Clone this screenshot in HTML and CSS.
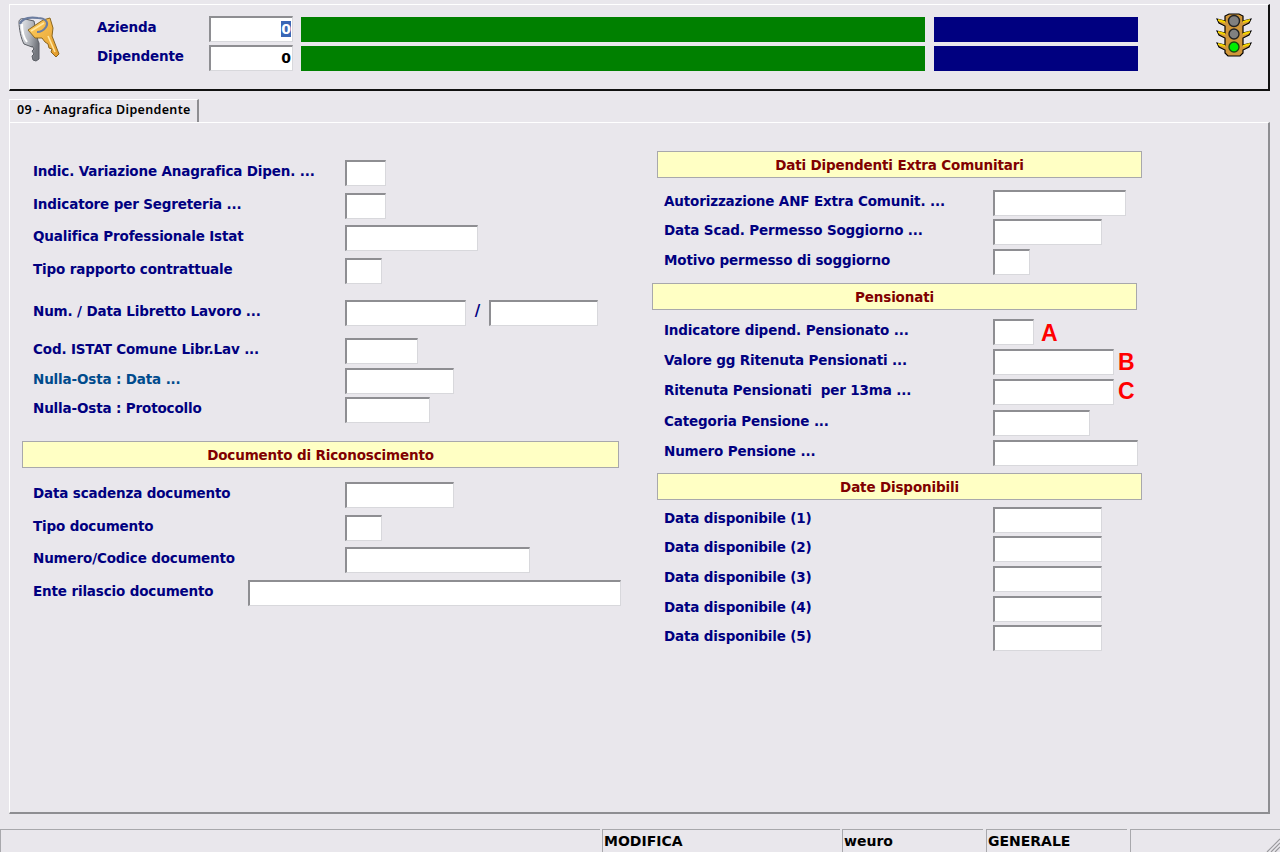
FILE: index.html
```html
<!DOCTYPE html>
<html lang="it">
<head>
<meta charset="utf-8">
<title>Anagrafica Dipendente</title>
<link rel="stylesheet" href="styles.css">
</head>
<body>
<div class="app">
  <header class="top">
    <svg class="keys" viewBox="0 0 44 50" width="44" height="50" aria-hidden="true">
      <defs>
        <linearGradient id="silver" x1="0" y1="0" x2="1" y2="0.4">
          <stop offset="0" stop-color="#eef0f3"/>
          <stop offset="0.6" stop-color="#b4b7bd"/>
          <stop offset="1" stop-color="#74777e"/>
        </linearGradient>
        <linearGradient id="gold" x1="0" y1="0" x2="1" y2="1">
          <stop offset="0" stop-color="#ffcf62"/>
          <stop offset="1" stop-color="#e29a28"/>
        </linearGradient>
      </defs>
      <path d="M3 8 C3 5 6 4 9 5 L18 7 L22 27 L23 29 L23 45 L20 47 L17 46 L16 42 L18 40 L16 37 L18 35 L16 32 L16 33 L8 30 C5 25 3 14 3 8Z" fill="url(#silver)" stroke="#5a5d64" stroke-width="1"/>
      <path d="M6 10 C6 16 8 24 11 28" fill="none" stroke="#fff" stroke-width="2"/>
      <path d="M12 16 L27 6 L34 4 L37 14 L36 22 L43 40 L40 43 L35 38 L36 35 L33 34 L32 30 L29 28 L26 24 L19 24 Z" fill="url(#gold)" stroke="#8a6620" stroke-width="1"/>
      <path d="M15 17 L28 9 M32 22 L39 38" fill="none" stroke="#ffe6a0" stroke-width="1.6"/>
      <path d="M4 10 C6 4 14 3 22 4 C29 4 33 8 30 13 C28 16 24 18 21 18" fill="none" stroke="#6c7da0" stroke-width="2.2"/>
    </svg>
    <div class="id-labels">
      <div class="id-label">Azienda</div>
      <div class="id-label">Dipendente</div>
    </div>
    <div class="id-fields">
      <div class="id-row">
        <div class="input code"><span class="sel">0</span></div>
        <div class="bar green"></div>
        <div class="bar navy"></div>
      </div>
      <div class="id-row">
        <div class="input code"><span>0</span></div>
        <div class="bar green"></div>
        <div class="bar navy"></div>
      </div>
    </div>
    <svg class="light" viewBox="0 0 36 44" width="36" height="44" aria-hidden="true">
      <path d="M1 6 L9 8 L9 3 L13 1 L23 1 L27 3 L27 8 L35 6 L33 10 L27 13 L27 20 L35 18 L33 22 L27 25 L27 32 L35 30 L33 34 L27 37 L27 40 L24 43 L12 43 L9 40 L9 37 L3 34 L1 30 L9 32 L9 25 L3 22 L1 18 L9 20 L9 13 L3 10Z" fill="#d0973a" stroke="#000" stroke-width="1.2"/>
      <path d="M2 7 L9 9 M34 7 L27 9 M2 19 L9 21 M34 19 L27 21 M2 31 L9 33 M34 31 L27 33" stroke="#f5d400" stroke-width="2"/>
      <circle cx="18" cy="8" r="5.5" fill="#808080" stroke="#222" stroke-width="1.4"/>
      <circle cx="18" cy="21" r="5" fill="#808080" stroke="#222" stroke-width="1.4"/>
      <circle cx="18" cy="34" r="5" fill="#00f000" stroke="#1c4a10" stroke-width="1.4"/>
    </svg>
  </header>

  <nav class="tabs"><div class="tab">09 - Anagrafica Dipendente</div></nav>

  <main class="panel">
    <section class="col col-left">
      <div class="row m0"><label class="lab">Indic. Variazione Anagrafica Dipen. ...</label><div class="input w41"></div></div>
      <div class="row m7"><label class="lab">Indicatore per Segreteria ...</label><div class="input w41"></div></div>
      <div class="row m6"><label class="lab">Qualifica Professionale Istat</label><div class="input w133"></div></div>
      <div class="row m7"><label class="lab">Tipo rapporto contrattuale</label><div class="input w37"></div></div>
      <div class="row m16"><label class="lab">Num. / Data Libretto Lavoro ...</label><div class="input w121"></div><span class="slash">/</span><div class="input w109"></div></div>
      <div class="row m12"><label class="lab">Cod. ISTAT Comune Libr.Lav ...</label><div class="input w73"></div></div>
      <div class="row m4"><label class="lab lab-alt">Nulla-Osta : Data ...</label><div class="input w109"></div></div>
      <div class="row m3"><label class="lab">Nulla-Osta : Protocollo</label><div class="input w85"></div></div>
      <h2 class="band band-left">Documento di Riconoscimento</h2>
      <div class="row m14"><label class="lab">Data scadenza documento</label><div class="input w109"></div></div>
      <div class="row m7"><label class="lab">Tipo documento</label><div class="input w37"></div></div>
      <div class="row m6"><label class="lab">Numero/Codice documento</label><div class="input w185"></div></div>
      <div class="row m7"><label class="lab lab-short">Ente rilascio documento</label><div class="input w373"></div></div>
    </section>

    <section class="col col-right">
      <h2 class="band band-first">Dati Dipendenti Extra Comunitari</h2>
      <div class="row m12"><label class="lab lab-r">Autorizzazione ANF Extra Comunit. ...</label><div class="input w133"></div></div>
      <div class="row m3"><label class="lab lab-r">Data Scad. Permesso Soggiorno ...</label><div class="input w109"></div></div>
      <div class="row m4"><label class="lab lab-r">Motivo permesso di soggiorno</label><div class="input w37"></div></div>
      <h2 class="band band-shift">Pensionati</h2>
      <div class="row m9"><label class="lab lab-r">Indicatore dipend. Pensionato ...</label><div class="input w41"></div><span class="mark mark-a">A</span></div>
      <div class="row m4"><label class="lab lab-r">Valore gg Ritenuta Pensionati ...</label><div class="input w121"></div><span class="mark mark-b">B</span></div>
      <div class="row m4"><label class="lab lab-r">Ritenuta Pensionati&nbsp; per 13ma ...</label><div class="input w121"></div><span class="mark mark-c">C</span></div>
      <div class="row m5"><label class="lab lab-r">Categoria Pensione ...</label><div class="input w97"></div></div>
      <div class="row m4"><label class="lab lab-r">Numero Pensione ...</label><div class="input w145"></div></div>
      <h2 class="band band-date">Date Disponibili</h2>
      <div class="row m7"><label class="lab lab-r">Data disponibile (1)</label><div class="input w109"></div></div>
      <div class="row m3"><label class="lab lab-r">Data disponibile (2)</label><div class="input w109"></div></div>
      <div class="row m4"><label class="lab lab-r">Data disponibile (3)</label><div class="input w109"></div></div>
      <div class="row m4"><label class="lab lab-r">Data disponibile (4)</label><div class="input w109"></div></div>
      <div class="row m3"><label class="lab lab-r">Data disponibile (5)</label><div class="input w109"></div></div>
    </section>
  </main>

  <footer class="status">
    <div class="cell c1"></div>
    <div class="cell c2">MODIFICA</div>
    <div class="cell c3">weuro</div>
    <div class="cell c4">GENERALE</div>
    <div class="cell c5">
      <svg class="grip" viewBox="0 0 14 14" width="14" height="14" aria-hidden="true">
        <path d="M14 1 L1 14 M14 5 L5 14 M14 9 L9 14" stroke="#9a9a9e" stroke-width="1.2"/>
      </svg>
    </div>
  </footer>
</div>
</body>
</html>
```
FILE: styles.css
```css
* { box-sizing: border-box; }
html, body { margin: 0; padding: 0; }
body {
  width: 1280px;
  height: 852px;
  overflow: hidden;
  background: #e9e7ec;
  font-family: "DejaVu Sans", "Noto Sans", sans-serif;
}
.app { display: flex; flex-direction: column; height: 852px; padding-top: 4px; }

/* top identification strip */
.top {
  display: flex;
  align-items: flex-start;
  width: 1261px;
  height: 87px;
  margin-left: 9px;
  flex: none;
  border-top: 1px solid #fff;
  border-left: 1px solid #fff;
  border-right: 2px solid #111;
  border-bottom: 2px solid #111;
}
.keys { margin: 9px 0 0 6px; flex: none; }
.id-labels { width: 112px; margin: 10px 0 0 37px; flex: none; }
.id-label {
  height: 28.5px;
  line-height: 24px;
  font-size: 13.5px;
  font-weight: 700;
  letter-spacing: -.15px;
  color: #000080;
}
.id-fields { margin-top: 11px; width: 929px; flex: none; }
.id-row { display: flex; height: 26px; margin-bottom: 3px; }
.code {
  width: 84px;
  margin-right: 8px;
  padding-right: 1px;
  text-align: right;
  line-height: 22px;
  font-size: 14px;
  font-weight: 700;
  color: #000;
}
.sel { background: #3a67b5; color: #fff; }
.bar { height: 25px; margin-top: 1px; }
.green { width: 624px; background: #008000; margin-right: 9px; }
.navy { width: 204px; background: #000080; }
.light { margin: 8px 0 0 78px; flex: none; }

/* tab */
.tabs { height: 31px; padding: 8px 0 0 9px; flex: none; }
.tab {
  width: 190px;
  height: 23px;
  padding-left: 7px;
  line-height: 20px;
  font-family: "Noto Sans", sans-serif;
  font-size: 12.5px;
  font-weight: 600;
  letter-spacing: .33px;
  color: #000;
  border-top: 1px solid #fff;
  border-left: 1px solid #fff;
  border-right: 2px solid #8e8e92;
}

/* panel */
.panel {
  display: flex;
  width: 1261px;
  height: 692px;
  margin-left: 9px;
  flex: none;
  border-top: 1px solid #fff;
  border-left: 1px solid #fff;
  border-right: 2px solid #8e8e92;
  border-bottom: 2px solid #8e8e92;
}
.col { display: flex; flex-direction: column; }
.col-left { width: 647px; padding: 37px 0 0 12px; }
.col-right { width: 600px; padding: 28px 0 0 0; }

.row { display: flex; align-items: flex-start; height: 26px; }
.lab {
  display: block;
  width: 312px;
  margin-left: 11px;
  flex: none;
  height: 22px;
  line-height: 22px;
  white-space: nowrap;
  font-size: 13.5px;
  font-weight: 700;
  letter-spacing: -.15px;
  color: #000080;
}
.lab-alt { color: #004b8c; }
.lab-short { width: 215px; }
.lab-r { width: 329px; margin-left: 7px; }

.input {
  height: 26px;
  flex: none;
  background: #fff;
  border-top: 2px solid #8e8e92;
  border-left: 2px solid #8e8e92;
  border-right: 1px solid #d8d8dc;
  border-bottom: 1px solid #d8d8dc;
}
.w37 { width: 37px; }
.w41 { width: 41px; }
.w73 { width: 73px; }
.w85 { width: 85px; }
.w97 { width: 97px; }
.w109 { width: 109px; }
.w121 { width: 121px; }
.w133 { width: 133px; }
.w145 { width: 145px; }
.w185 { width: 185px; }
.w373 { width: 373px; }

.m0 { margin-top: 0; }
.m3 { margin-top: 3px; }
.m4 { margin-top: 4px; }
.m5 { margin-top: 5px; }
.m6 { margin-top: 6px; }
.m7 { margin-top: 7px; }
.m9 { margin-top: 9px; }
.m12 { margin-top: 12px; }
.m14 { margin-top: 14px; }
.m16 { margin-top: 16px; }

.slash {
  width: 23px;
  text-align: center;
  line-height: 22px;
  font-size: 15px;
  font-weight: 700;
  color: #000080;
}
.mark {
  margin-left: 4px;
  font-family: "Liberation Sans", sans-serif;
  font-size: 23px;
  font-weight: 700;
  color: #f00;
}
.mark-a { margin-left: 7px; line-height: 28px; }
.mark-b { line-height: 26px; }
.mark-c { line-height: 24px; }

.band {
  width: 485px;
  height: 27px;
  margin: 0;
  text-align: center;
  line-height: 27px;
  font-size: 13.5px;
  font-weight: 700;
  letter-spacing: -.15px;
  color: #800000;
  background: #ffffc4;
  border: 1px solid #a8a8ac;
}
.band-left { width: 597px; margin: 18px 0 0 0; }
.band-shift { margin: 8px 0 0 -5px; }
.band-date { margin-top: 7px; }

/* status bar */
.status { display: flex; margin-top: 15px; height: 23px; flex: none; }
.cell {
  height: 23px;
  padding-left: 1px;
  line-height: 23px;
  font-size: 14px;
  font-weight: 700;
  color: #000;
  border-top: 1px solid #a8a8ac;
  border-left: 1px solid #a8a8ac;
  flex: none;
  position: relative;
}
.c1 { width: 600px; margin-right: 2px; }
.c2 { width: 238px; margin-right: 2px; }
.c3 { width: 141px; margin-right: 3px; }
.c4 { width: 141px; margin-right: 3px; }
.c5 { width: 150px; }
.grip { position: absolute; right: 0; bottom: 0; }
```
